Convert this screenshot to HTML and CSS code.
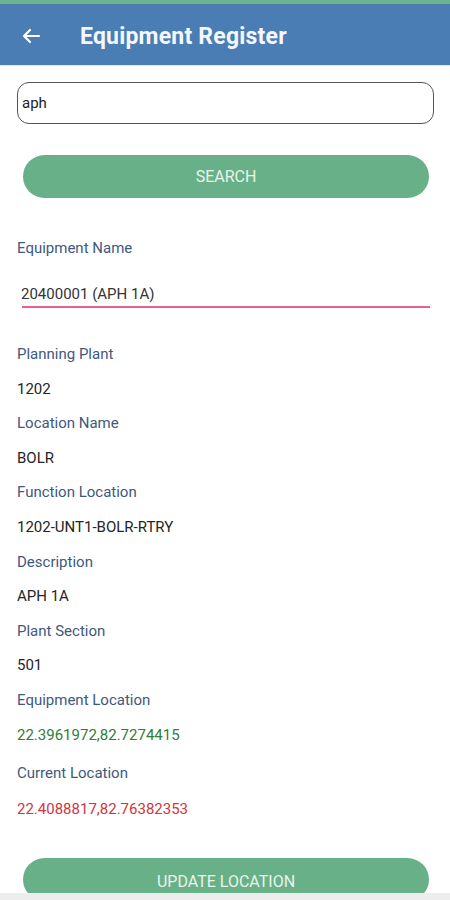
FILE: index.html
```html
<!DOCTYPE html>
<html>
<head>
<meta charset="utf-8">
<link rel="stylesheet" href="styles.css">
</head>
<body>
<div class="status"></div>
<header class="appbar">
  <svg class="back" width="20" height="16" viewBox="0 0 20 16"><path d="M18 8H3M9 2L3 8l6 6" fill="none" stroke="#fff" stroke-width="2.2" stroke-linecap="round" stroke-linejoin="round"/></svg>
  <h1 class="title">Equipment Register</h1>
</header>
<main class="content">
  <div class="search-box">aph</div>
  <button class="btn btn-search">SEARCH</button>
  <div class="label label-first">Equipment Name</div>
  <div class="name-field">20400001 (APH 1A)</div>
  <div class="details">
    <div class="label">Planning Plant</div>
    <div class="value">1202</div>
    <div class="label">Location Name</div>
    <div class="value">BOLR</div>
    <div class="label">Function Location</div>
    <div class="value">1202-UNT1-BOLR-RTRY</div>
    <div class="label">Description</div>
    <div class="value">APH 1A</div>
    <div class="label">Plant Section</div>
    <div class="value">501</div>
    <div class="label">Equipment Location</div>
    <div class="value green">22.3961972,82.7274415</div>
    <div class="label current">Current Location</div>
    <div class="value red">22.4088817,82.76382353</div>
  </div>
  <button class="btn btn-update">UPDATE LOCATION</button>
</main>
<div class="navbar"></div>
</body>
</html>
```
FILE: styles.css
```css
* { box-sizing: border-box; }
html, body { margin: 0; padding: 0; }
body {
  width: 450px;
  height: 900px;
  overflow: hidden;
  background: #fff;
  font-family: Roboto, "Liberation Sans", sans-serif;
}
.status { height: 4px; background: #6ab48a; }
.appbar {
  height: 62px;
  background: #4a7db3;
  border-bottom: 1px solid #dce8f3;
  display: flex;
  align-items: center;
  padding-left: 21px;
  padding-top: 3px;
}
.back { display: block; margin-top: -1px; }
.title {
  margin: 0 0 0 39px;
  color: #f4f7fb;
  font-size: 23px;
  font-weight: 700;
  letter-spacing: 0.2px;
}
.content {
  display: flex;
  flex-direction: column;
  padding: 16px 0 0 0;
}
.search-box {
  margin: 0 16px 0 17px;
  height: 42px;
  border: 1.3px solid #555;
  border-radius: 12px;
  display: flex;
  align-items: center;
  padding-left: 4px;
  font-size: 15px;
  color: #222;
}
.btn {
  border: none;
  margin: 0 21px 0 23px;
  height: 43px;
  border-radius: 22px;
  background: #68b087;
  color: #e8f4ec;
  font-family: Roboto, "Liberation Sans", sans-serif;
  font-size: 16px;
  padding: 0;
}
.btn-search { margin-top: 31px; }
.label {
  font-size: 15px;
  line-height: 20px;
  color: #40597e;
  padding-left: 17px;
}
.label-first { margin-top: 40px; }
.name-field {
  margin: 26px 20px 0 22px;
  font-size: 15px;
  line-height: 20px;
  color: #333;
  padding-bottom: 2px;
  border-bottom: 2px solid #e6638b;
  text-indent: -1px;
}
.details {
  margin-top: 36px;
  display: flex;
  flex-direction: column;
  gap: 14.6px;
}
.value {
  font-size: 15px;
  line-height: 20px;
  color: #252525;
  padding-left: 17px;
}
.green { color: #2f7d36; }
.red { color: #d3353a; }
.current { margin-top: 4px; }
.details .red { margin-top: 1px; }
.btn-update { margin-top: 39px; padding-top: 5px; }
.navbar {
  position: fixed;
  left: 0;
  right: 0;
  bottom: 0;
  height: 7px;
  background: #ededed;
}
```
